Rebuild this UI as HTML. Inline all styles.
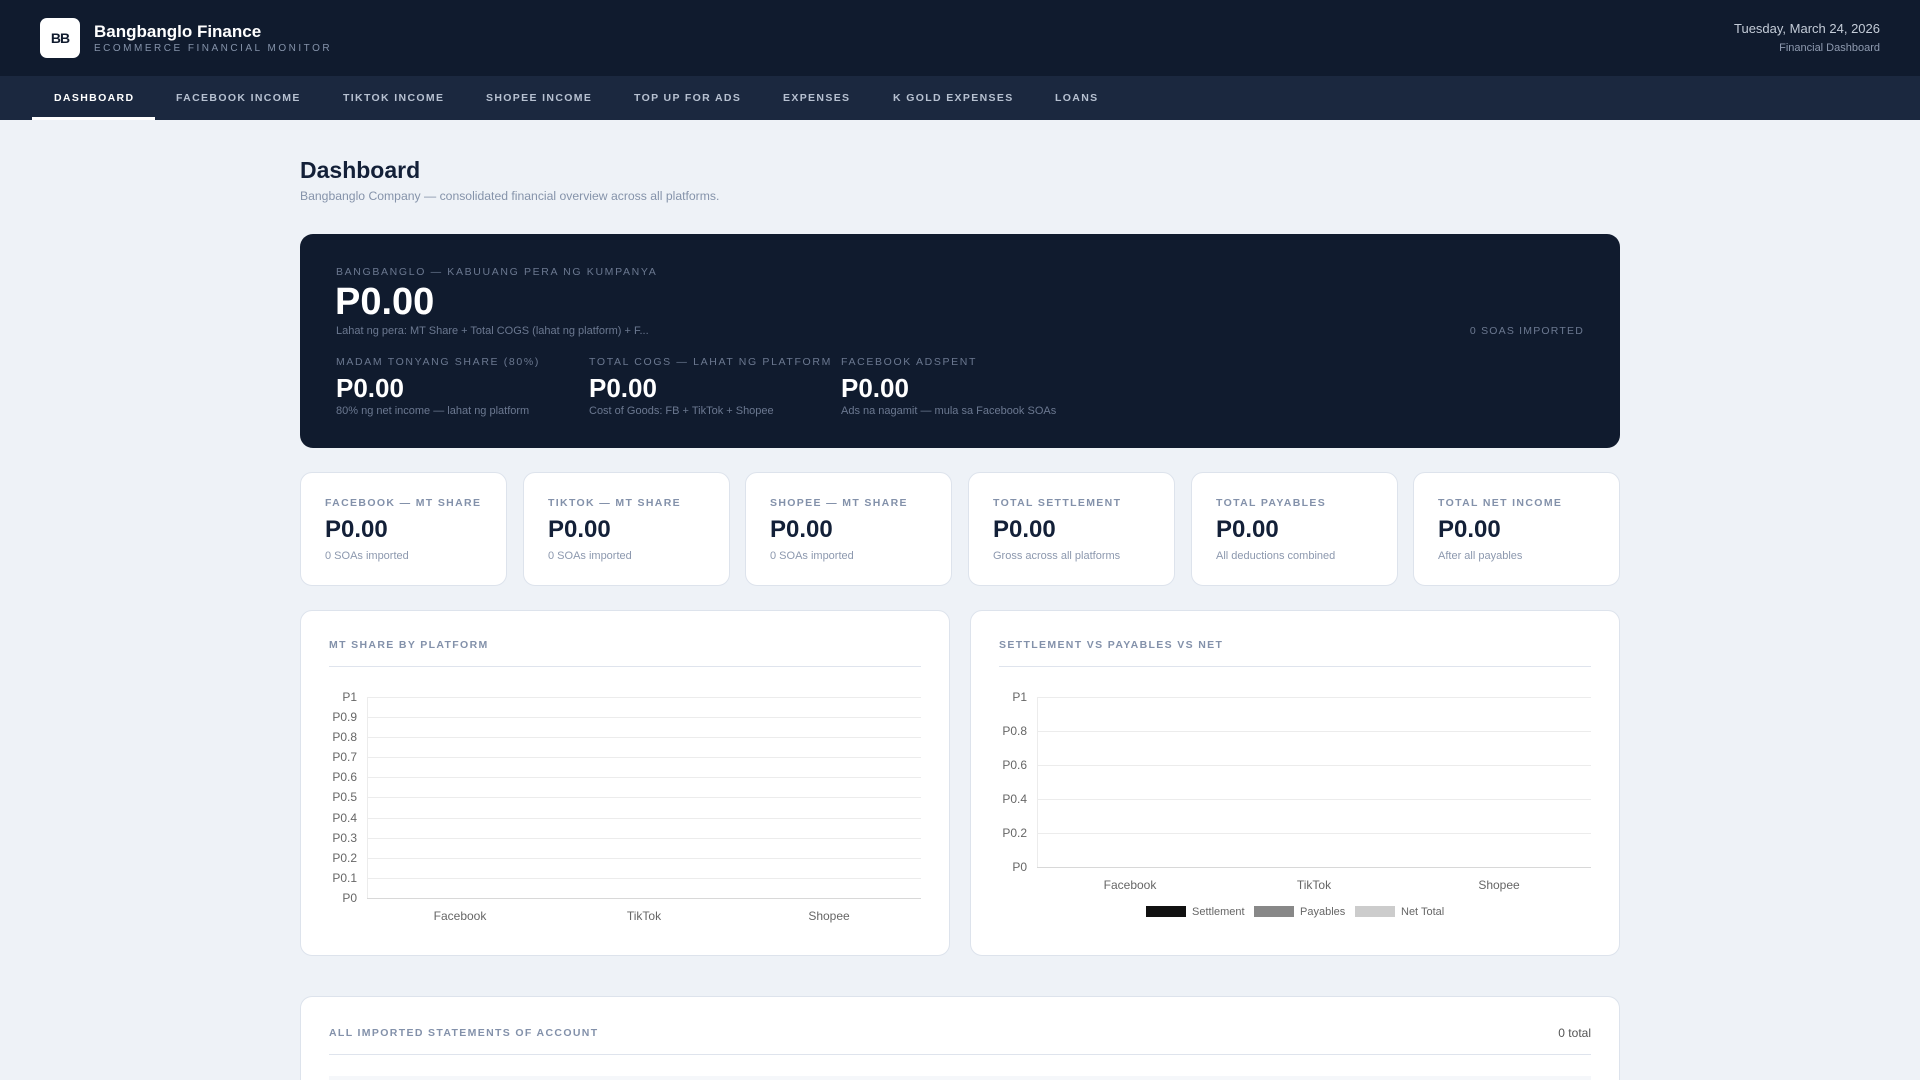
<!DOCTYPE html>
<html><head><meta charset="utf-8"><style>
*{margin:0;padding:0;box-sizing:border-box}
html,body{width:1920px;height:1080px;overflow:hidden}
body{background:#eef2f7;font-family:"Liberation Sans",sans-serif;position:relative}
.a{position:absolute;white-space:nowrap}
.hdr{left:0;top:0;width:1920px;height:76px;background:#101b2e}
.nav{left:0;top:76px;width:1920px;height:44px;background:#1b283f}
.ni{top:92px;font-size:10.5px;font-weight:bold;letter-spacing:1.35px;color:#b7c1d1}
.card{background:#fff;border:1px solid #dde3ec;border-radius:12px}
.lbl{font-size:10.5px;font-weight:bold;letter-spacing:1.35px;color:#8391aa}
.hl{font-size:10.5px;letter-spacing:1.65px;color:#6b7890}
.hd{font-size:11px;color:#6b7890}
.sv{font-size:24px;font-weight:bold;color:#132038}
.ss{font-size:11px;color:#8c98ae}
</style></head><body>
<div class="a hdr"></div>
<div class="a" style="left:40px;top:18px;width:40px;height:40px;background:#fff;border-radius:7px;font-size:14px;font-weight:bold;color:#101b2e;text-align:center;line-height:40px;letter-spacing:-1px">BB</div>
<div class="a" style="left:94px;top:22px;font-size:17px;font-weight:bold;color:#fff">Bangbanglo Finance</div>
<div class="a" style="left:94px;top:43px;font-size:10px;letter-spacing:2.5px;color:#8593aa">ECOMMERCE FINANCIAL MONITOR</div>
<div class="a" style="right:40px;top:21px;font-size:13px;color:#c4ccd8">Tuesday, March 24, 2026</div>
<div class="a" style="right:40px;top:42px;font-size:11px;color:#8f9bb0">Financial Dashboard</div>
<div class="a nav"></div>
<div class="a ni" style="left:54px;color:#fff">DASHBOARD</div>
<div class="a" style="left:32px;top:117px;width:123px;height:3px;background:#fff"></div>
<div class="a ni" style="left:176px">FACEBOOK INCOME</div>
<div class="a ni" style="left:343px">TIKTOK INCOME</div>
<div class="a ni" style="left:486px">SHOPEE INCOME</div>
<div class="a ni" style="left:634px">TOP UP FOR ADS</div>
<div class="a ni" style="left:783px">EXPENSES</div>
<div class="a ni" style="left:893px">K GOLD EXPENSES</div>
<div class="a ni" style="left:1055px">LOANS</div>

<div class="a" style="left:300px;top:157px;font-size:23px;font-weight:bold;color:#132038">Dashboard</div>
<div class="a" style="left:300px;top:189px;font-size:12.2px;color:#8593aa">Bangbanglo Company — consolidated financial overview across all platforms.</div>

<div class="a" style="left:300px;top:234px;width:1320px;height:214px;background:#101b2e;border-radius:13px"></div>
<div class="a hl" style="left:336px;top:266px">BANGBANGLO — KABUUANG PERA NG KUMPANYA</div>
<div class="a" style="left:335px;top:281px;font-size:38px;font-weight:bold;color:#fff">P0.00</div>
<div class="a hd" style="left:336px;top:325px">Lahat ng pera: MT Share + Total COGS (lahat ng platform) + F...</div>
<div class="a hl" style="right:336px;top:325px;letter-spacing:1.2px">0 SOAS IMPORTED</div>
<div class="a hl" style="left:336px;top:356px">MADAM TONYANG SHARE (80%)</div>
<div class="a hl" style="left:589px;top:356px">TOTAL COGS — LAHAT NG PLATFORM</div>
<div class="a hl" style="left:841px;top:356px">FACEBOOK ADSPENT</div>
<div class="a" style="left:336px;top:373px;font-size:26px;font-weight:bold;color:#fff">P0.00</div>
<div class="a" style="left:589px;top:373px;font-size:26px;font-weight:bold;color:#fff">P0.00</div>
<div class="a" style="left:841px;top:373px;font-size:26px;font-weight:bold;color:#fff">P0.00</div>
<div class="a hd" style="left:336px;top:405px">80% ng net income — lahat ng platform</div>
<div class="a hd" style="left:589px;top:405px">Cost of Goods: FB + TikTok + Shopee</div>
<div class="a hd" style="left:841px;top:405px">Ads na nagamit — mula sa Facebook SOAs</div>

<div class="a card" style="left:300px;top:472px;width:207px;height:114px"></div>
<div class="a card" style="left:523px;top:472px;width:207px;height:114px"></div>
<div class="a card" style="left:745px;top:472px;width:207px;height:114px"></div>
<div class="a card" style="left:968px;top:472px;width:207px;height:114px"></div>
<div class="a card" style="left:1191px;top:472px;width:207px;height:114px"></div>
<div class="a card" style="left:1413px;top:472px;width:207px;height:114px"></div>
<div class="a lbl" style="left:325px;top:497px">FACEBOOK — MT SHARE</div>
<div class="a lbl" style="left:548px;top:497px">TIKTOK — MT SHARE</div>
<div class="a lbl" style="left:770px;top:497px">SHOPEE — MT SHARE</div>
<div class="a lbl" style="left:993px;top:497px">TOTAL SETTLEMENT</div>
<div class="a lbl" style="left:1216px;top:497px">TOTAL PAYABLES</div>
<div class="a lbl" style="left:1438px;top:497px">TOTAL NET INCOME</div>
<div class="a sv" style="left:325px;top:516px">P0.00</div>
<div class="a sv" style="left:548px;top:516px">P0.00</div>
<div class="a sv" style="left:770px;top:516px">P0.00</div>
<div class="a sv" style="left:993px;top:516px">P0.00</div>
<div class="a sv" style="left:1216px;top:516px">P0.00</div>
<div class="a sv" style="left:1438px;top:516px">P0.00</div>
<div class="a ss" style="left:325px;top:550px">0 SOAs imported</div>
<div class="a ss" style="left:548px;top:550px">0 SOAs imported</div>
<div class="a ss" style="left:770px;top:550px">0 SOAs imported</div>
<div class="a ss" style="left:993px;top:550px">Gross across all platforms</div>
<div class="a ss" style="left:1216px;top:550px">All deductions combined</div>
<div class="a ss" style="left:1438px;top:550px">After all payables</div>

<div class="a card" style="left:300px;top:610px;width:650px;height:346px"></div>
<div class="a card" style="left:970px;top:610px;width:650px;height:346px"></div>
<div class="a lbl" style="left:329px;top:639px">MT SHARE BY PLATFORM</div>
<div class="a lbl" style="left:999px;top:639px">SETTLEMENT VS PAYABLES VS NET</div>
<div class="a" style="left:329px;top:666px;width:592px;height:1px;background:#dfe4ed"></div>
<div class="a" style="left:999px;top:666px;width:592px;height:1px;background:#dfe4ed"></div>

<svg class="a" style="left:0;top:0" width="1920" height="1080" font-family="Liberation Sans, sans-serif" font-size="12" fill="#666">
<g stroke="#ececec" stroke-width="1">
<line x1="367" x2="921" y1="697.5" y2="697.5"/><line x1="367" x2="921" y1="717.5" y2="717.5"/><line x1="367" x2="921" y1="737.5" y2="737.5"/><line x1="367" x2="921" y1="757.5" y2="757.5"/><line x1="367" x2="921" y1="777.5" y2="777.5"/><line x1="367" x2="921" y1="797.5" y2="797.5"/><line x1="367" x2="921" y1="818.5" y2="818.5"/><line x1="367" x2="921" y1="838.5" y2="838.5"/><line x1="367" x2="921" y1="858.5" y2="858.5"/><line x1="367" x2="921" y1="878.5" y2="878.5"/>
<line x1="367.5" x2="367.5" y1="697" y2="898"/>
<line x1="1037" x2="1591" y1="697.5" y2="697.5"/><line x1="1037" x2="1591" y1="731.5" y2="731.5"/><line x1="1037" x2="1591" y1="765.5" y2="765.5"/><line x1="1037" x2="1591" y1="799.5" y2="799.5"/><line x1="1037" x2="1591" y1="833.5" y2="833.5"/>
<line x1="1037.5" x2="1037.5" y1="697" y2="867"/>
</g>
<line x1="367" x2="921" y1="898.5" y2="898.5" stroke="#d8d8d8"/>
<line x1="1037" x2="1591" y1="867.5" y2="867.5" stroke="#d8d8d8"/>
<g text-anchor="end">
<text x="357" y="701">P1</text><text x="357" y="721">P0.9</text><text x="357" y="741">P0.8</text><text x="357" y="761">P0.7</text><text x="357" y="781">P0.6</text><text x="357" y="801">P0.5</text><text x="357" y="822">P0.4</text><text x="357" y="842">P0.3</text><text x="357" y="862">P0.2</text><text x="357" y="882">P0.1</text><text x="357" y="902">P0</text>
<text x="1027" y="701">P1</text><text x="1027" y="735">P0.8</text><text x="1027" y="769">P0.6</text><text x="1027" y="803">P0.4</text><text x="1027" y="837">P0.2</text><text x="1027" y="871">P0</text>
</g>
<g text-anchor="middle">
<text x="460" y="920">Facebook</text><text x="644" y="920">TikTok</text><text x="829" y="920">Shopee</text>
<text x="1130" y="889">Facebook</text><text x="1314" y="889">TikTok</text><text x="1499" y="889">Shopee</text>
</g>
<g font-size="11">
<rect x="1146" y="906" width="40" height="11" fill="#111"/><text x="1192" y="915">Settlement</text>
<rect x="1254" y="906" width="40" height="11" fill="#888"/><text x="1300" y="915">Payables</text>
<rect x="1355" y="906" width="40" height="11" fill="#ccc"/><text x="1401" y="915">Net Total</text>
</g>
</svg>

<div class="a" style="left:300px;top:996px;width:1320px;height:84px;background:#fff;border:1px solid #dde3ec;border-bottom:none;border-radius:12px 12px 0 0"></div>
<div class="a lbl" style="left:329px;top:1027px">ALL IMPORTED STATEMENTS OF ACCOUNT</div>
<div class="a" style="right:329px;top:1026px;font-size:12px;color:#555">0 total</div>
<div class="a" style="left:329px;top:1054px;width:1262px;height:1px;background:#dfe4ed"></div>
<div class="a" style="left:329px;top:1076px;width:1262px;height:4px;background:#f5f7fa"></div>
</body></html>
